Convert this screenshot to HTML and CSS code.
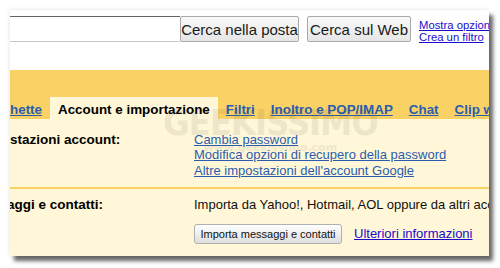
FILE: index.html
```html
<!DOCTYPE html>
<html lang="it">
<head>
<meta charset="utf-8">
<title>Impostazioni Gmail</title>
<link rel="stylesheet" href="styles.css">
</head>
<body>
<div class="frame">
  <div class="topbar">
    <div class="search-input"></div>
    <button class="btn-big">Cerca nella posta</button>
    <button class="btn-big btn-web">Cerca sul Web</button>
    <div class="search-links">
      <a href="#">Mostra opzioni di ricerca</a>
      <a href="#">Crea un filtro</a>
    </div>
  </div>
  <div class="tabband">
    <a class="tab tab-first" href="#">hette</a>
    <span class="tab tab-active">Account e importazione</span>
    <a class="tab" href="#">Filtri</a>
    <a class="tab" href="#">Inoltro e POP/IMAP</a>
    <a class="tab" href="#">Chat</a>
    <a class="tab" href="#">Clip web</a>
  </div>
  <div class="content">
    <div class="watermark">
      <span class="wm-big">GEEKISSIMO</span>
      <span class="wm-small">www.geekissimo.com</span>
    </div>
    <div class="row row-first">
      <div class="label">stazioni account:</div>
      <div class="value">
        <a class="blue" href="#">Cambia password</a>
        <a class="blue" href="#">Modifica opzioni di recupero della password</a>
        <a class="blue" href="#">Altre impostazioni dell'account Google</a>
      </div>
    </div>
    <div class="sep"></div>
    <div class="row row-second">
      <div class="label label-cut">aggi e contatti:</div>
      <div class="value">
        <div class="plain">Importa da Yahoo!, Hotmail, AOL oppure da altri account di posta web o POP3.</div>
        <div class="actions">
          <button class="btn-small">Importa messaggi e contatti</button>
          <a class="more" href="#">Ulteriori informazioni</a>
        </div>
      </div>
    </div>
  </div>
</div>
</body>
</html>
```
FILE: styles.css
```css
html, body {
  margin: 0;
  padding: 0;
  background: #ffffff;
}
body {
  font-family: "Liberation Sans", Arial, sans-serif;
  width: 500px;
  height: 268px;
  overflow: hidden;
}
.frame {
  margin: 10px 0 0 10px;
  width: 479px;
  height: 246px;
  overflow: hidden;
  background: #ffffff;
  box-shadow: 4px 5px 4px rgba(0, 0, 0, 0.6), -1px -1px 3px rgba(0, 0, 0, 0.08);
  display: flex;
  flex-direction: column;
  position: relative;
}
.topbar {
  height: 60px;
  box-sizing: border-box;
  padding-top: 6px;
  display: flex;
  align-items: flex-start;
  flex-shrink: 0;
}
.search-input {
  width: 170px;
  height: 26px;
  box-sizing: border-box;
  border-top: 1px solid #666666;
  border-bottom: 1px solid #c8c8c8;
  background: #ffffff;
  flex-shrink: 0;
}
.btn-big {
  height: 26px;
  box-sizing: border-box;
  width: 119px;
  border: 1px solid #a9a9a9;
  border-radius: 2px;
  background: linear-gradient(#f9f9f9, #e6e6e6);
  font-family: "Liberation Sans", Arial, sans-serif;
  font-size: 15px;
  color: #1a1a1a;
  padding: 0;
  flex-shrink: 0;
}
.btn-web {
  width: 104px;
  margin-left: 8px;
}
.search-links {
  margin-left: 8px;
  display: flex;
  flex-direction: column;
  white-space: nowrap;
  font-size: 11.3px;
  line-height: 12px;
  padding-top: 3px;
}
.search-links a {
  color: #1a0ccc;
  text-decoration: underline;
}
.tabband {
  height: 49px;
  box-sizing: border-box;
  background: #f9d165;
  display: flex;
  align-items: flex-end;
  white-space: nowrap;
  flex-shrink: 0;
  position: relative;
  z-index: 1;
}
.tab {
  display: block;
  height: 22px;
  box-sizing: border-box;
  padding: 5px 8px 0 8px;
  font-size: 13.4px;
  line-height: 16px;
  font-weight: bold;
  color: #2a5db0;
  text-decoration: underline;
  flex-shrink: 0;
}
.tab-first {
  padding-left: 0;
}
.tab-active {
  background: #fff7d7;
  color: #000000;
  text-decoration: none;
}
.content {
  flex: 1;
  background: #fff7d7;
  position: relative;
}
.row {
  display: flex;
  white-space: nowrap;
  position: relative;
}
.row-first {
  padding: 13px 0 9px 0;
}
.row-second {
  padding-top: 8px;
}
.label {
  width: 184px;
  flex-shrink: 0;
  font-size: 13.5px;
  line-height: 15.4px;
  font-weight: bold;
  color: #000000;
}
.label-cut {
  margin-left: -3px;
  width: 187px;
}
.value {
  display: flex;
  flex-direction: column;
  font-size: 13px;
  line-height: 15.4px;
}
.blue {
  color: #2a5db0;
  text-decoration: underline;
}
.plain {
  color: #111111;
}
.sep {
  height: 2px;
  background: #f9d165;
  position: relative;
}
.actions {
  display: flex;
  align-items: center;
  margin-top: 11px;
}
.btn-small {
  height: 20px;
  width: 148px;
  box-sizing: border-box;
  border: 1px solid #b0b0b0;
  border-radius: 3px;
  background: linear-gradient(#ffffff, #dedede);
  font-family: "Liberation Sans", Arial, sans-serif;
  font-size: 11px;
  color: #111111;
  padding: 0;
}
.more {
  margin-left: 12px;
  color: #1a0ccc;
  text-decoration: underline;
  font-size: 13px;
}
.watermark {
  position: absolute;
  left: 153px;
  top: -14px;
  display: flex;
  flex-direction: column;
  align-items: center;
  pointer-events: none;
  opacity: 0.08;
  z-index: 2;
}
.wm-big {
  font-family: "DejaVu Sans Condensed", "DejaVu Sans", sans-serif;
  font-weight: bold;
  font-size: 36px;
  line-height: 36px;
  letter-spacing: -1px;
  color: #333333;
}
.wm-small {
  font-family: "DejaVu Sans", sans-serif;
  font-weight: bold;
  font-size: 11px;
  line-height: 14px;
  color: #333333;
}
```
